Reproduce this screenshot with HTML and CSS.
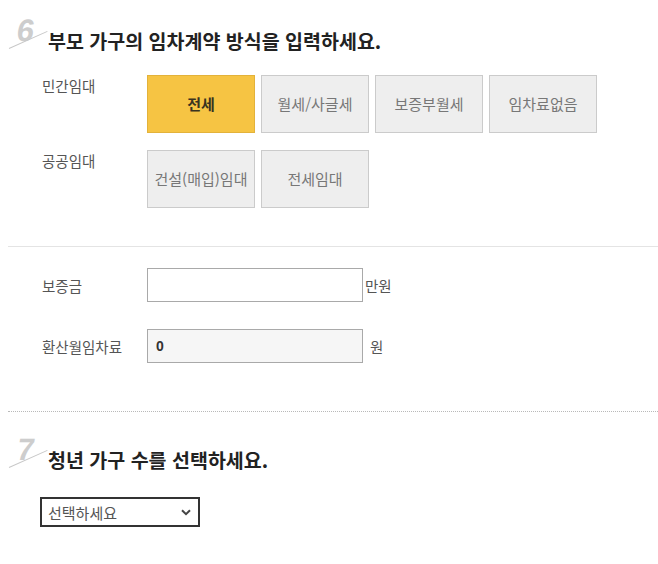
FILE: index.html
```html
<!DOCTYPE html>
<html lang="ko">
<head>
<meta charset="utf-8">
<title>임차계약 방식</title>
<link rel="stylesheet" href="styles.css">
</head>
<body>
<div class="page">
  <section class="q">
    <div class="qhead">
      <span class="num">6</span>
      <h2 class="qtitle">부모 가구의 임차계약 방식을 입력하세요.</h2>
    </div>
    <div class="opts">
      <div class="opt-row">
        <div class="lbl">민간임대</div>
        <div class="btns">
          <button class="btn btn-on" type="button">전세</button>
          <button class="btn" type="button">월세/사글세</button>
          <button class="btn" type="button">보증부월세</button>
          <button class="btn" type="button">임차료없음</button>
        </div>
      </div>
      <div class="opt-row">
        <div class="lbl">공공임대</div>
        <div class="btns">
          <button class="btn" type="button">건설(매입)임대</button>
          <button class="btn" type="button">전세임대</button>
        </div>
      </div>
    </div>
    <hr class="sep">
    <div class="fields">
      <div class="field-row">
        <label class="flbl" for="dep">보증금</label>
        <input class="inp" id="dep" type="text" value="">
        <span class="unit">만원</span>
      </div>
      <div class="field-row">
        <label class="flbl" for="rent">환산월임차료</label>
        <input class="inp inp-ro" id="rent" type="text" value="0" readonly>
        <span class="unit unit-won">원</span>
      </div>
    </div>
  </section>
  <hr class="dots">
  <section class="q q7">
    <div class="qhead">
      <span class="num">7</span>
      <h2 class="qtitle">청년 가구 수를 선택하세요.</h2>
    </div>
    <div class="sel-wrap">
      <select class="sel">
        <option>선택하세요</option>
      </select>
      <svg class="chev" width="10" height="7" viewBox="0 0 10 7"><path d="M1 1.2 L5 5.2 L9 1.2" fill="none" stroke="#444" stroke-width="2"/></svg>
    </div>
  </section>
</div>
</body>
</html>
```
FILE: styles.css
```css
html, body {
  margin: 0;
  padding: 0;
  background: #fff;
}
body {
  font-family: "Noto Sans CJK KR", "Noto Sans", sans-serif;
  color: #555;
}
.page {
  padding: 16px 0 0 8px;
}
.qhead {
  display: flex;
  align-items: flex-start;
  padding-left: 7px;
  position: relative;
  height: 38px;
}
.qhead::after {
  content: "";
  position: absolute;
  left: 1px;
  top: 32px;
  width: 42px;
  height: 1px;
  background: #c8c8c8;
  transform-origin: left center;
  transform: rotate(-24deg);
}
.num {
  flex: none;
  display: inline-block;
  width: 33px;
  padding-left: 2px;
  box-sizing: border-box;
  font-family: "Liberation Sans", Arial, sans-serif;
  font-size: 31px;
  line-height: 30px;
  font-weight: bold;
  font-style: normal;
  color: #cdcdcd;
  transform: skewX(-9deg);
}
.qtitle {
  margin: 13px 0 0;
  font-size: 19.5px;
  line-height: 24px;
  font-weight: bold;
  color: #222;
  white-space: nowrap;
}
.opts {
  padding-top: 21px;
  display: flex;
  flex-direction: column;
  gap: 17px;
}
.opt-row {
  display: flex;
  align-items: flex-start;
}
.lbl {
  flex: none;
  padding-left: 34px;
  width: 139px;
  box-sizing: border-box;
  font-size: 14.5px;
  line-height: 20px;
  padding-top: 1px;
  color: #555;
  white-space: nowrap;
}
.btns {
  display: flex;
  gap: 6px;
}
.btn {
  flex: none;
  width: 108px;
  height: 58px;
  margin: 0;
  padding: 0;
  border: 1px solid #cbcbcb;
  background: #eeeeee;
  color: #777;
  font-family: inherit;
  font-size: 15px;
  line-height: 20px;
  white-space: nowrap;
}
.btn-on {
  background: #f6c443;
  border-color: #e3b23a;
  color: #3a3320;
  font-weight: bold;
}
.sep {
  margin: 38px 0 0;
  height: 0;
  border: 0;
  border-top: 1px solid #e4e4e4;
}
.fields {
  padding-top: 21px;
  display: flex;
  flex-direction: column;
  gap: 27px;
}
.field-row {
  display: flex;
  align-items: center;
}
.flbl {
  flex: none;
  padding-left: 34px;
  width: 139px;
  box-sizing: border-box;
  font-size: 14.5px;
  color: #555;
  white-space: nowrap;
}
.inp {
  flex: none;
  width: 216px;
  height: 34px;
  box-sizing: border-box;
  margin: 0;
  border: 1px solid #a9a9a9;
  background: #fff;
  padding: 0 8px;
  font-family: "Liberation Sans", Arial, sans-serif;
  font-size: 14px;
  font-weight: bold;
  color: #333;
  outline: none;
}
.inp-ro {
  background: #f6f6f6;
}
.unit {
  margin-left: 2px;
  font-size: 14.5px;
  color: #555;
}
.unit-won {
  margin-left: 7px;
}
.dots {
  margin: 48px 0 0;
  height: 0;
  border: 0;
  border-top: 1px dotted #b9b9b9;
}
.q7 .qhead {
  margin-top: 23px;
}
.sel-wrap {
  margin: 24px 0 0 32px;
  width: 160px;
  position: relative;
}
.sel {
  appearance: none;
  -webkit-appearance: none;
  display: block;
  width: 160px;
  height: 30px;
  box-sizing: border-box;
  margin: 0;
  border: 2px solid #333;
  border-radius: 0;
  background: #fff;
  padding: 0 0 0 6px;
  font-family: "Noto Sans CJK KR", sans-serif;
  font-size: 15px;
  color: #555;
}
.chev {
  position: absolute;
  right: 9px;
  top: 12px;
}
```
